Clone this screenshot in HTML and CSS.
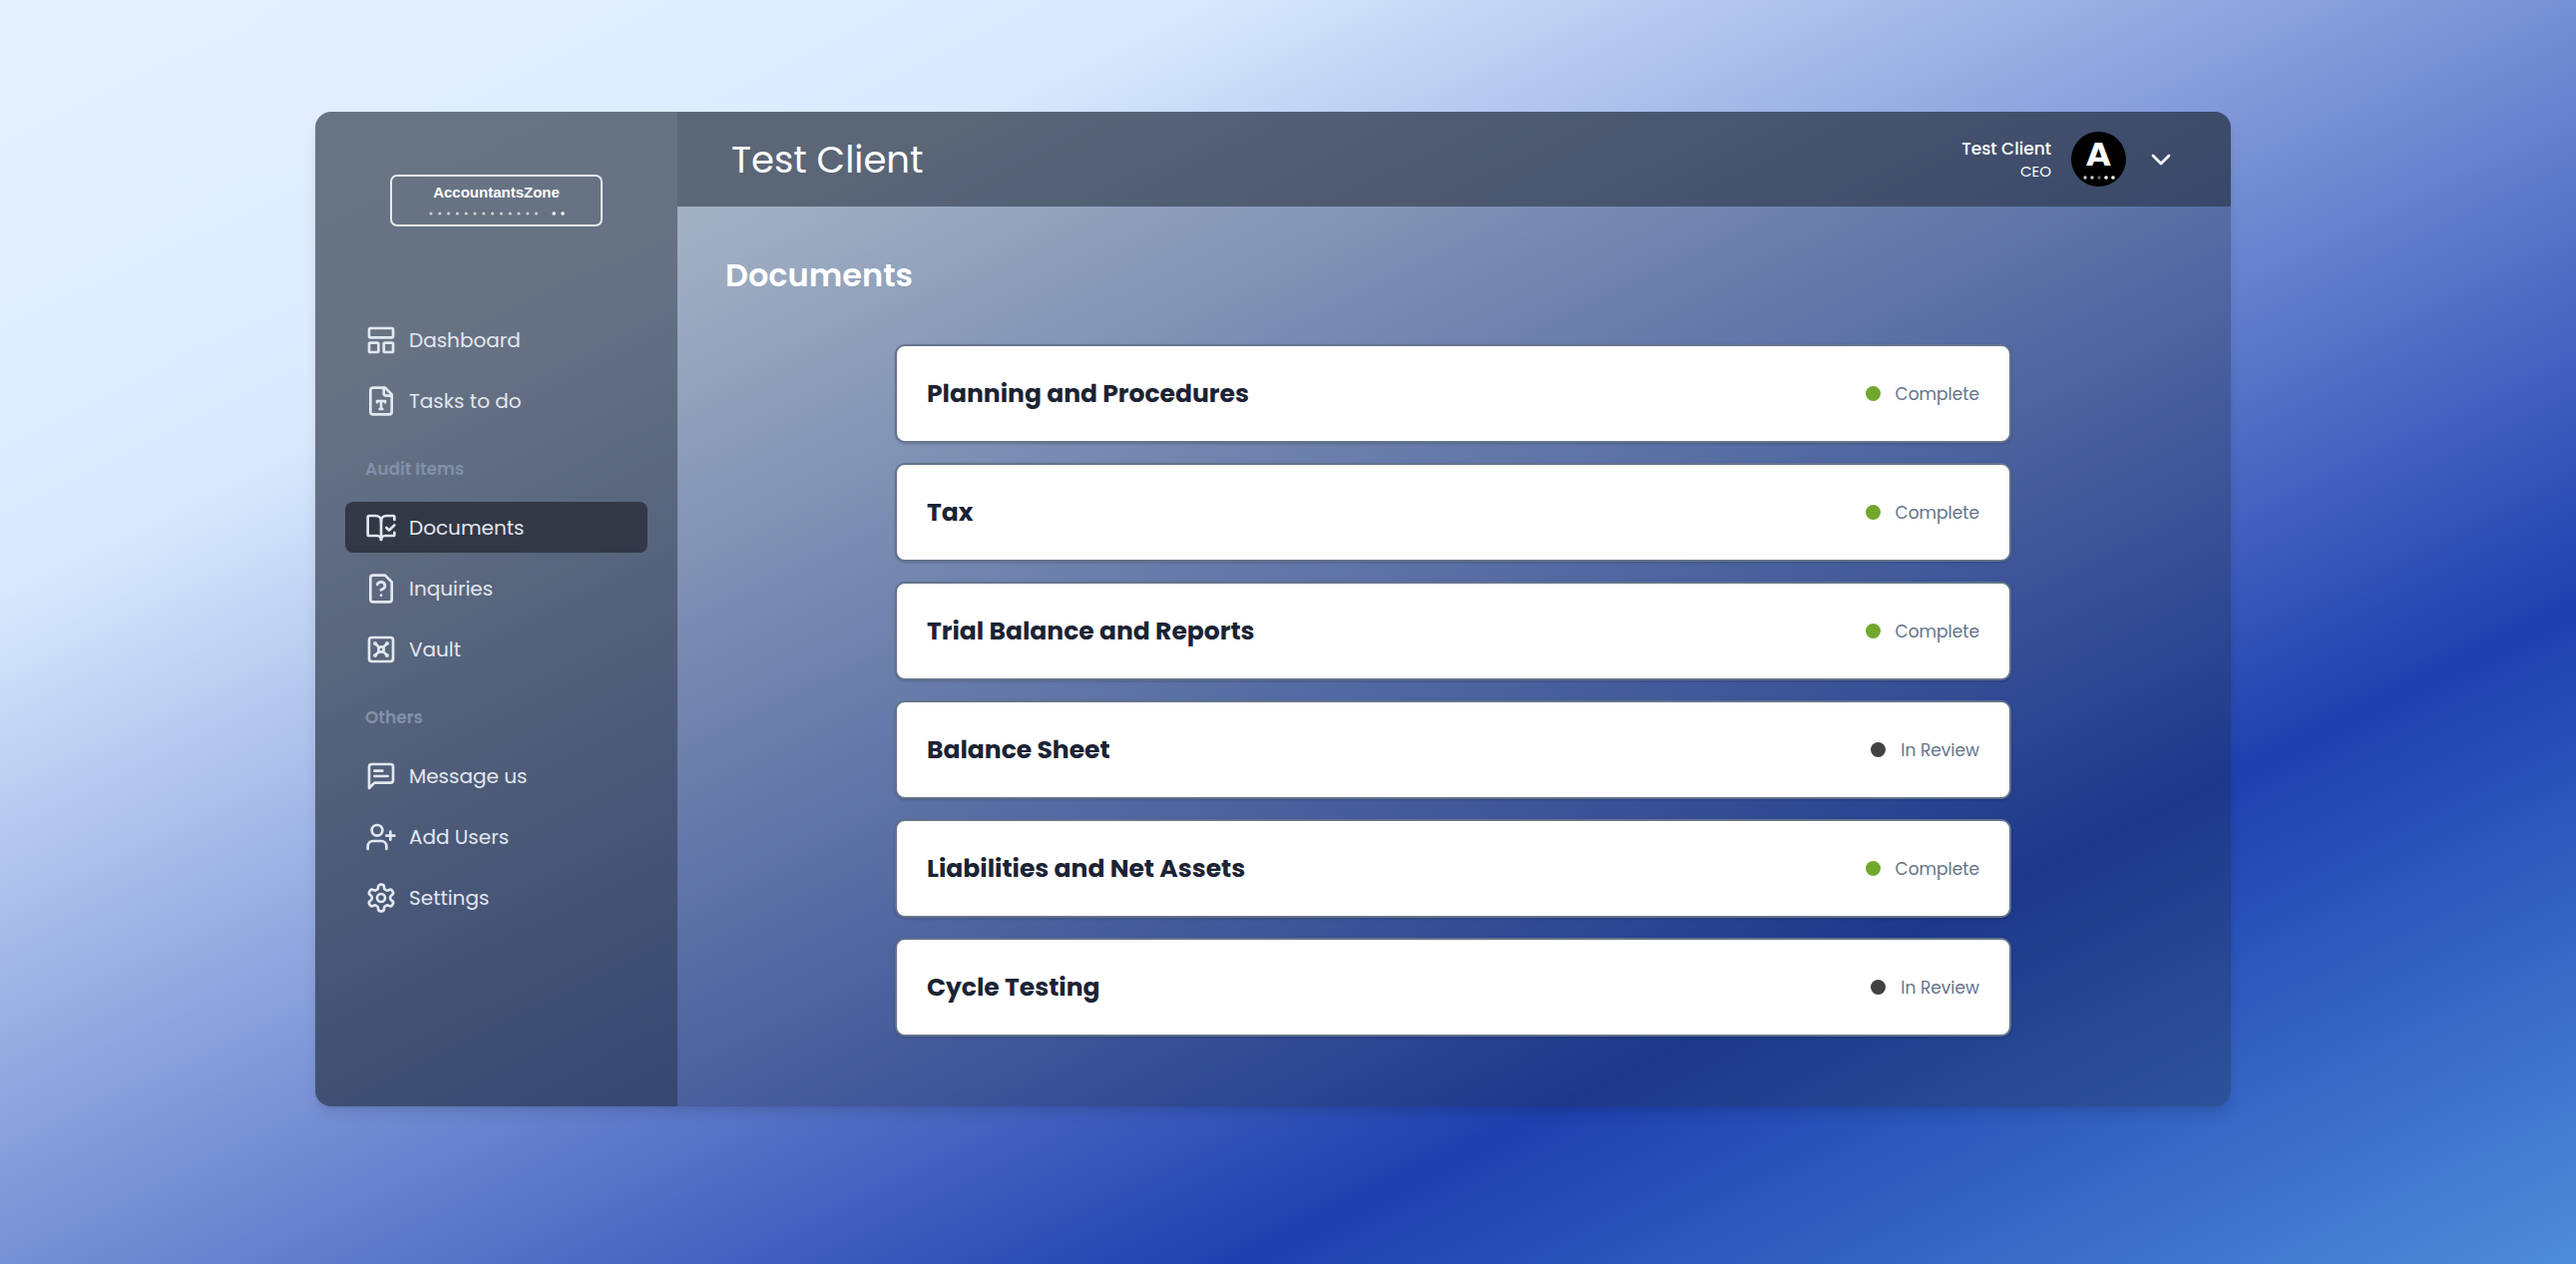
FILE: index.html
```html
<!DOCTYPE html>
<html lang="en">
<head>
<meta charset="utf-8">
<meta name="viewport" content="width=device-width, initial-scale=1">
<title>Documents - AccountantsZone</title>
<link rel="stylesheet" href="styles.css">
</head>
<body>
<div class="shell">
  <aside class="sidebar">
    <div class="logo">
      <span class="logo-name">AccountantsZone</span>
      <svg class="logo-dots" width="136" height="4" viewBox="0 0 136 4" aria-hidden="true">
        <g fill="#cfcfd2">
          <circle cx="2" cy="2" r="1.6"/><circle cx="10.8" cy="2" r="1.6"/><circle cx="19.6" cy="2" r="1.6"/><circle cx="28.4" cy="2" r="1.6"/><circle cx="37.2" cy="2" r="1.6"/><circle cx="46" cy="2" r="1.6"/><circle cx="54.8" cy="2" r="1.6"/><circle cx="63.6" cy="2" r="1.6"/><circle cx="72.4" cy="2" r="1.6"/><circle cx="81.2" cy="2" r="1.6"/><circle cx="90" cy="2" r="1.6"/><circle cx="98.8" cy="2" r="1.6"/><circle cx="107.6" cy="2" r="1.6"/>
        </g>
        <circle cx="116.4" cy="2" r="1.6" fill="#6b6b70"/>
        <circle cx="125.2" cy="2" r="1.8" fill="#fff"/><circle cx="134" cy="2" r="1.8" fill="#fff"/>
      </svg>
    </div>
    <nav class="nav" aria-label="Main">
      <a class="nav-item" href="#dashboard">
        <svg class="icon" viewBox="0 0 24 24"><rect width="18" height="7" x="3" y="3" rx="1"/><rect width="7" height="7" x="3" y="14" rx="1"/><rect width="7" height="7" x="14" y="14" rx="1"/></svg>
        <span>Dashboard</span>
      </a>
      <a class="nav-item" href="#tasks">
        <svg class="icon" viewBox="0 0 24 24"><path d="M15 2H6a2 2 0 0 0-2 2v16a2 2 0 0 0 2 2h12a2 2 0 0 0 2-2V7Z"/><path d="M14 2v4a2 2 0 0 0 2 2h4"/><path d="M9 13v-1h6v1"/><path d="M12 12v6"/><path d="M11 18h2"/></svg>
        <span>Tasks to do</span>
      </a>
      <h2 class="nav-label">Audit Items</h2>
      <a class="nav-item active" href="#documents" aria-current="page">
        <svg class="icon" viewBox="0 0 24 24"><path d="M12 21V7"/><path d="m16 12 2 2 4-4"/><path d="M22 6V4a1 1 0 0 0-1-1h-5a4 4 0 0 0-4 4 4 4 0 0 0-4-4H3a1 1 0 0 0-1 1v13a1 1 0 0 0 1 1h6a3 3 0 0 1 3 3 3 3 0 0 1 3-3h6a1 1 0 0 0 1-1v-1.3"/></svg>
        <span>Documents</span>
      </a>
      <a class="nav-item" href="#inquiries">
        <svg class="icon" viewBox="0 0 24 24"><path d="M15 2H6a2 2 0 0 0-2 2v16a2 2 0 0 0 2 2h12a2 2 0 0 0 2-2V7Z"/><path d="M9.1 9a3 3 0 0 1 5.82 1c0 2-3 3-3 3"/><path d="M12 17h.01"/></svg>
        <span>Inquiries</span>
      </a>
      <a class="nav-item" href="#vault">
        <svg class="icon" viewBox="0 0 24 24"><rect width="18" height="18" x="3" y="3" rx="2"/><circle cx="7.5" cy="7.5" r=".5" fill="currentColor"/><path d="m7.9 7.9 2.7 2.7"/><circle cx="16.5" cy="7.5" r=".5" fill="currentColor"/><path d="m13.4 10.6 2.7-2.7"/><circle cx="7.5" cy="16.5" r=".5" fill="currentColor"/><path d="m7.9 16.1 2.7-2.7"/><circle cx="16.5" cy="16.5" r=".5" fill="currentColor"/><path d="m13.4 13.4 2.7 2.7"/><circle cx="12" cy="12" r="2"/></svg>
        <span>Vault</span>
      </a>
      <h2 class="nav-label">Others</h2>
      <a class="nav-item" href="#message">
        <svg class="icon" viewBox="0 0 24 24"><path d="M21 15a2 2 0 0 1-2 2H7l-4 4V5a2 2 0 0 1 2-2h14a2 2 0 0 1 2 2z"/><path d="M13 8H7"/><path d="M17 12H7"/></svg>
        <span>Message us</span>
      </a>
      <a class="nav-item" href="#users">
        <svg class="icon" viewBox="0 0 24 24"><path d="M16 21v-2a4 4 0 0 0-4-4H6a4 4 0 0 0-4 4v2"/><circle cx="9" cy="7" r="4"/><path d="M19 8v6"/><path d="M22 11h-6"/></svg>
        <span>Add Users</span>
      </a>
      <a class="nav-item" href="#settings">
        <svg class="icon" viewBox="0 0 24 24"><path d="M12.22 2h-.44a2 2 0 0 0-2 2v.18a2 2 0 0 1-1 1.73l-.43.25a2 2 0 0 1-2 0l-.15-.08a2 2 0 0 0-2.73.73l-.22.38a2 2 0 0 0 .73 2.73l.15.1a2 2 0 0 1 1 1.72v.51a2 2 0 0 1-1 1.74l-.15.09a2 2 0 0 0-.73 2.73l.22.38a2 2 0 0 0 2.73.73l.15-.08a2 2 0 0 1 2 0l.43.25a2 2 0 0 1 1 1.73V20a2 2 0 0 0 2 2h.44a2 2 0 0 0 2-2v-.18a2 2 0 0 1 1-1.73l.43-.25a2 2 0 0 1 2 0l.15.08a2 2 0 0 0 2.73-.73l.22-.39a2 2 0 0 0-.73-2.73l-.15-.08a2 2 0 0 1-1-1.74v-.5a2 2 0 0 1 1-1.74l.15-.09a2 2 0 0 0 .73-2.73l-.22-.38a2 2 0 0 0-2.73-.73l-.15.08a2 2 0 0 1-2 0l-.43-.25a2 2 0 0 1-1-1.73V4a2 2 0 0 0-2-2z"/><circle cx="12" cy="12" r="3"/></svg>
        <span>Settings</span>
      </a>
    </nav>
  </aside>
  <div class="content">
    <header class="topbar">
      <p class="client">Test Client</p>
      <div class="account">
        <div class="who">
          <span class="who-name">Test Client</span>
          <span class="who-role">CEO</span>
        </div>
        <div class="avatar">
          <span class="avatar-letter">A</span>
          <svg class="avatar-dots" width="32" height="4" viewBox="0 0 32 4" aria-hidden="true"><circle cx="2" cy="2" r="1.7" fill="#ccc"/><circle cx="9" cy="2" r="1.7" fill="#ccc"/><circle cx="16" cy="2" r="1.7" fill="#666"/><circle cx="23" cy="2" r="1.8" fill="#fff"/><circle cx="30" cy="2" r="1.8" fill="#fff"/></svg>
        </div>
        <button class="menu" type="button" aria-label="Account menu">
          <svg class="chevron" viewBox="0 0 24 24"><path d="m6 9 6 6 6-6"/></svg>
        </button>
      </div>
    </header>
    <main class="main">
      <h1 class="title">Documents</h1>
      <ul class="docs">
        <li><a class="doc" href="#planning"><span class="doc-name">Planning and Procedures</span><span class="status"><i class="dot done"></i>Complete</span></a></li>
        <li><a class="doc" href="#tax"><span class="doc-name">Tax</span><span class="status"><i class="dot done"></i>Complete</span></a></li>
        <li><a class="doc" href="#trial"><span class="doc-name">Trial Balance and Reports</span><span class="status"><i class="dot done"></i>Complete</span></a></li>
        <li><a class="doc" href="#balance"><span class="doc-name">Balance Sheet</span><span class="status"><i class="dot review"></i>In Review</span></a></li>
        <li><a class="doc" href="#liabilities"><span class="doc-name">Liabilities and Net Assets</span><span class="status"><i class="dot done"></i>Complete</span></a></li>
        <li><a class="doc" href="#cycle"><span class="doc-name">Cycle Testing</span><span class="status"><i class="dot review"></i>In Review</span></a></li>
      </ul>
    </main>
  </div>
</div>
</body>
</html>
```
FILE: styles.css
```css
* {
  box-sizing: border-box;
}

body {
  margin: 0;
  min-height: 100vh;
  padding: 112px 346px 112px 316px;
  font-family: Poppins, Inter, "Open Sans", sans-serif;
  background: linear-gradient(to bottom right, #e5f1ff 0%, #daeafe 23%, #1e40af 74%, #4e8cd9 100%) no-repeat;
}

.shell {
  display: flex;
  border-radius: 16px;
  overflow: hidden;
  background: rgba(31, 41, 55, 0.3);
  box-shadow: 0 10px 15px -3px rgba(0, 0, 0, 0.1), 0 4px 6px -4px rgba(0, 0, 0, 0.1);
}

/* Sidebar */

.sidebar {
  flex: 0 0 363px;
  padding: 63px 30px 40px;
  background: rgba(31, 41, 55, 0.45);
}

.logo {
  display: flex;
  flex-direction: column;
  align-items: center;
  gap: 11px;
  width: 213px;
  height: 52px;
  margin: 0 auto 88px;
  padding-top: 8px;
  border: 2px solid #e8eaed;
  border-radius: 7px;
}

.logo-name {
  font-family: "Liberation Sans", Arial, sans-serif;
  font-size: 15px;
  font-weight: 700;
  line-height: 16px;
  color: #fff;
}

.nav {
  display: flex;
  flex-direction: column;
  gap: 10px;
}

.nav-item {
  display: flex;
  align-items: center;
  gap: 12px;
  height: 51px;
  padding: 0 20px;
  border-radius: 8px;
  font-size: 20px;
  line-height: 28px;
  color: #e2e8f0;
  text-decoration: none;
}

.nav-item.active {
  background: #323846;
}

.nav-label {
  margin: 19px 20px 9px;
  font-size: 17px;
  font-weight: 600;
  line-height: 28px;
  color: #8291ab;
}

.icon {
  width: 32px;
  height: 32px;
}

.icon,
.chevron {
  flex: none;
  fill: none;
  stroke: currentColor;
  stroke-width: 2;
  stroke-linecap: round;
  stroke-linejoin: round;
}

/* Top bar */

.content {
  flex: 1;
  min-width: 0;
}

.topbar {
  display: flex;
  align-items: center;
  justify-content: space-between;
  height: 95px;
  padding: 0 54px;
  background: rgba(31, 41, 55, 0.54);
  color: #fff;
}

.client {
  margin: 0;
  font-size: 37px;
  line-height: 48px;
}

.account {
  display: flex;
  align-items: center;
}

.who {
  display: flex;
  flex-direction: column;
  align-items: flex-end;
  margin-right: 20px;
}

.who-name {
  font-size: 17px;
  font-weight: 500;
  line-height: 24px;
}

.who-role {
  font-size: 15px;
  line-height: 22px;
}

.avatar {
  display: flex;
  flex-direction: column;
  align-items: center;
  gap: 5px;
  width: 55px;
  height: 55px;
  padding-top: 7px;
  border-radius: 50%;
  background: #000;
}

.avatar-letter {
  font-family: "DejaVu Sans", sans-serif;
  font-size: 32px;
  font-weight: 700;
  line-height: 32px;
}

.menu {
  display: flex;
  margin-left: 19px;
  padding: 0;
  border: 0;
  background: none;
  color: #fff;
}

.chevron {
  width: 32px;
  height: 32px;
}

/* Documents */

.main {
  padding: 45px 50px 70px 48px;
}

.title {
  margin: 0;
  font-size: 32px;
  font-weight: 600;
  line-height: 48px;
  color: #fff;
}

.docs {
  display: flex;
  flex-direction: column;
  gap: 20px;
  max-width: 1119px;
  margin: 45px auto 0;
  padding: 0;
  list-style: none;
}

.doc {
  display: flex;
  align-items: center;
  justify-content: space-between;
  height: 99px;
  padding: 0 30px;
  border: 2px solid #64748b;
  border-radius: 10px;
  background: #fff;
  box-shadow: 0 1px 3px rgba(0, 0, 0, 0.1), 0 1px 2px rgba(0, 0, 0, 0.1);
  text-decoration: none;
}

.doc-name {
  font-size: 25px;
  font-weight: 700;
  line-height: 36px;
  color: #1b2334;
}

.status {
  display: flex;
  align-items: center;
  gap: 15px;
  font-size: 17px;
  line-height: 28px;
  color: #64748b;
}

.dot {
  width: 15px;
  height: 15px;
  border-radius: 50%;
}

.dot.done {
  background: #70a72c;
}

.dot.review {
  background: #424242;
}
```
